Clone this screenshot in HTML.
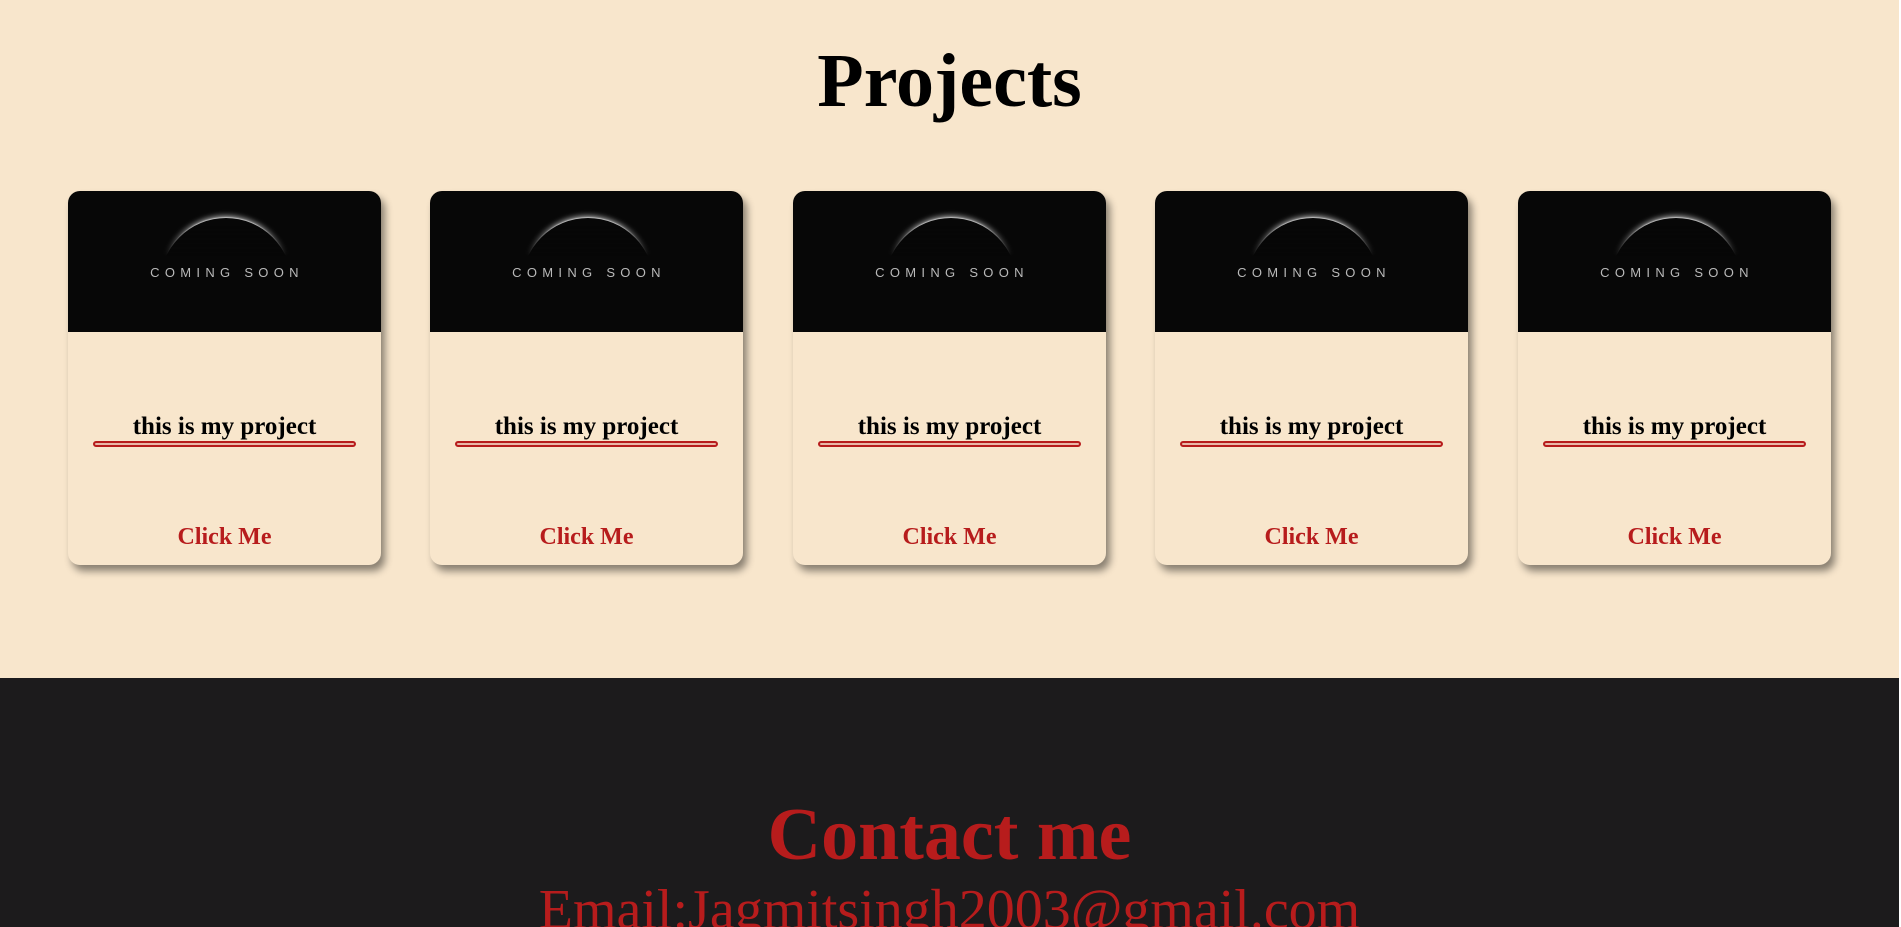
<!DOCTYPE html>
<html><head><meta charset="utf-8"><style>
*{margin:0;padding:0;box-sizing:border-box}
html,body{width:1901px;height:927px;overflow:hidden;background:#fff}
body{position:relative;font-family:"Liberation Serif",serif}
.top{position:absolute;left:0;top:0;width:1899px;height:678px;background:#f8e6cc}
.dark{position:absolute;left:0;top:678px;width:1899px;height:249px;background:#1c1b1c}
h1{position:absolute;left:0;width:1899px;text-align:center;font-weight:bold}
.card{position:absolute;top:191px;width:313px;height:374px;background:#f8e6cc;border-radius:12px;box-shadow:4px 6px 8px rgba(0,0,0,.45);overflow:hidden}
.img{position:absolute;left:0;top:0;width:313px;height:141px;background:#070707;overflow:hidden}
.arcw{position:absolute;left:80px;top:15px;width:156px;height:80px;-webkit-mask-image:linear-gradient(to bottom,#000 0,#000 18px,transparent 50px);mask-image:linear-gradient(to bottom,#000 0,#000 18px,transparent 50px)}
.arc{position:absolute;left:12px;top:12px;width:132px;height:132px;border-radius:50%;background:#070707;box-shadow:0 -3px 6px -1px rgba(255,255,255,.7),0 -1px 1px rgba(255,255,255,.5)}
.cs{position:absolute;left:0;width:313px;top:74px;text-align:center;font-family:"Liberation Sans",sans-serif;font-size:13px;letter-spacing:5.3px;color:#b9b9b9;padding-left:5px}
.t{position:absolute;left:0;width:313px;top:222px;text-align:center;font-weight:bold;font-size:25px;color:#000}
.ln{position:absolute;left:25px;top:250px;width:263px;height:6px;border:2px solid #b71c1c;border-radius:3px;background:#e9b8a8}
.cm{position:absolute;left:0;width:313px;top:333px;text-align:center;font-weight:bold;font-size:24px;color:#b71c1c}
</style></head><body>
<div class="top"></div>
<div class="dark"></div>
<h1 style="top:38px;font-size:76px;color:#000;line-height:1.15">Projects</h1>

<div class="card" style="left:68px"><div class="img"><div class="arcw"><div class="arc"></div></div><div class="cs">COMING SOON</div></div><div class="t">this is my project</div><div class="ln"></div><div class="cm">Click Me</div></div>
<div class="card" style="left:430px"><div class="img"><div class="arcw"><div class="arc"></div></div><div class="cs">COMING SOON</div></div><div class="t">this is my project</div><div class="ln"></div><div class="cm">Click Me</div></div>
<div class="card" style="left:793px"><div class="img"><div class="arcw"><div class="arc"></div></div><div class="cs">COMING SOON</div></div><div class="t">this is my project</div><div class="ln"></div><div class="cm">Click Me</div></div>
<div class="card" style="left:1155px"><div class="img"><div class="arcw"><div class="arc"></div></div><div class="cs">COMING SOON</div></div><div class="t">this is my project</div><div class="ln"></div><div class="cm">Click Me</div></div>
<div class="card" style="left:1518px"><div class="img"><div class="arcw"><div class="arc"></div></div><div class="cs">COMING SOON</div></div><div class="t">this is my project</div><div class="ln"></div><div class="cm">Click Me</div></div>

<h1 style="top:798px;font-size:74px;color:#b71c1c;line-height:1">Contact me</h1>
<div style="position:absolute;left:0;width:1899px;top:882px;text-align:center;font-size:56px;color:#b71c1c;line-height:1">Email:Jagmitsingh2003@gmail.com</div>
</body></html>
